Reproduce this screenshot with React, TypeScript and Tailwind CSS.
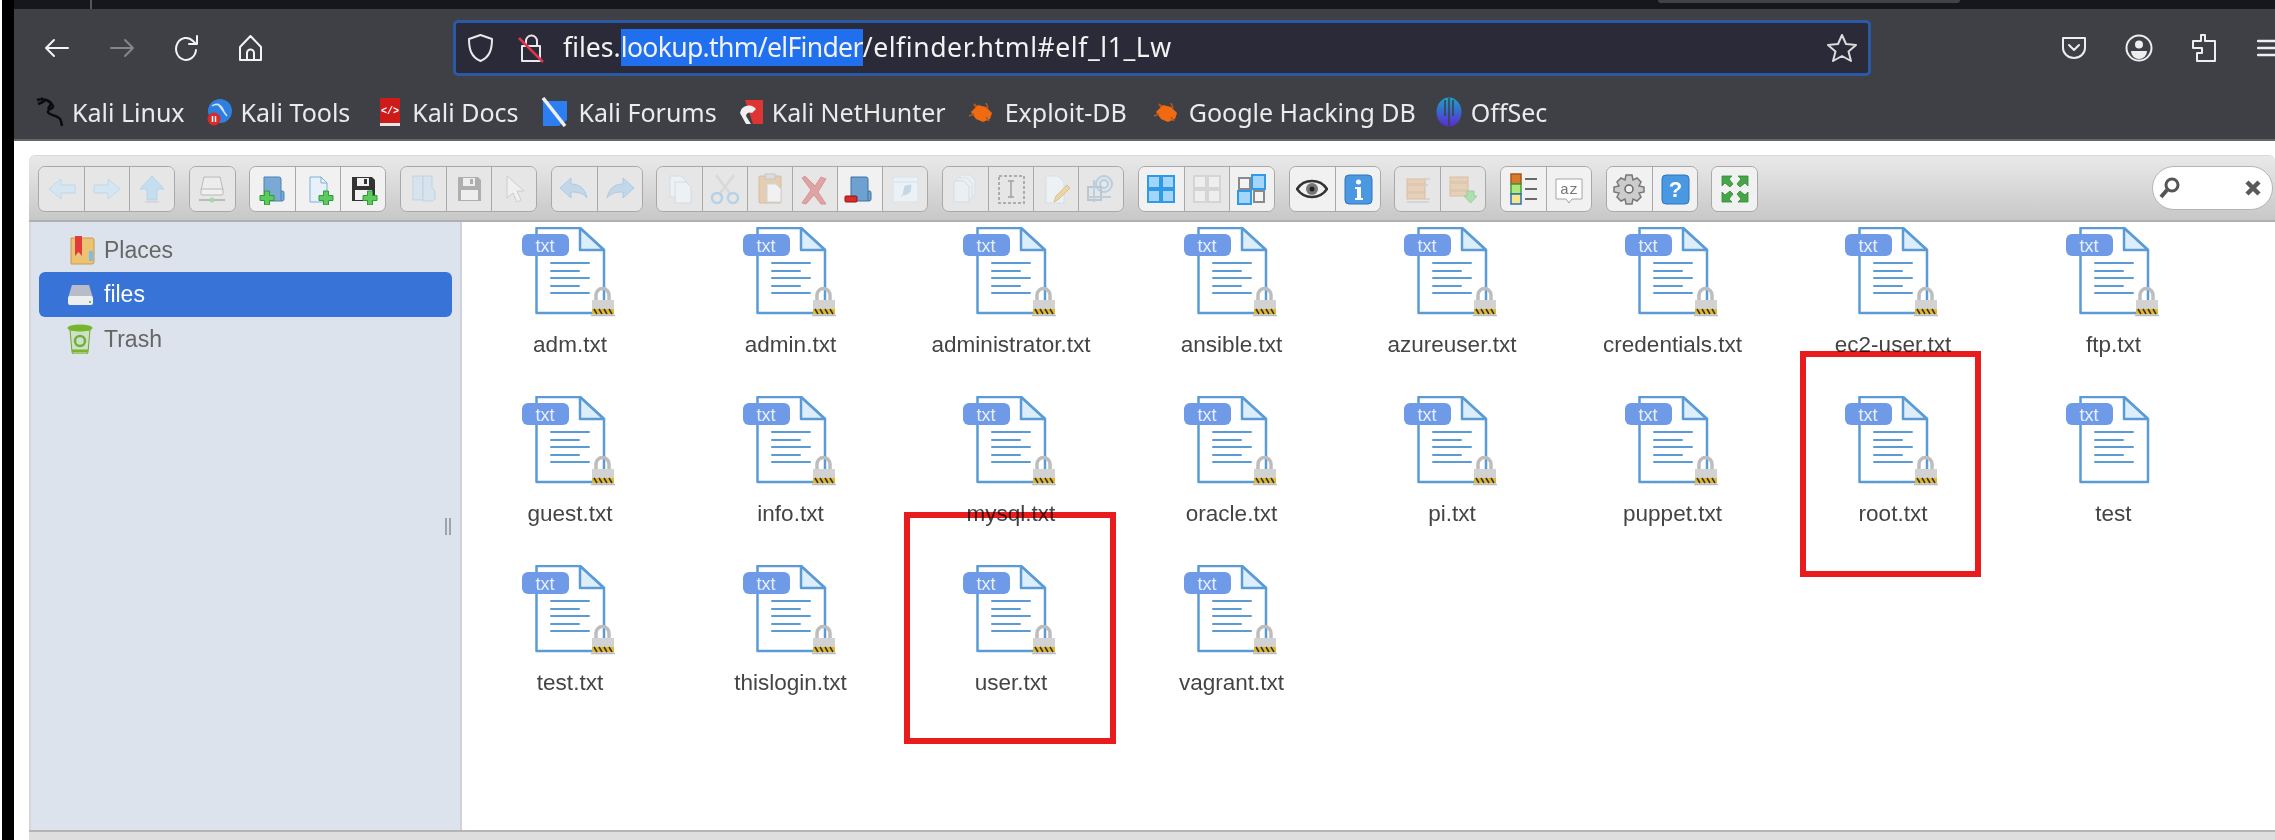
import React from "react";

const UI = { fontFamily: '"Noto Sans", sans-serif' };

const Stroke = ({ w, h, children, sw = 2 }: { w: number; h: number; children: React.ReactNode; sw?: number }) => (
  <svg width={w} height={h} viewBox={`0 0 ${w} ${h}`} fill="none" stroke="currentColor" strokeWidth={sw} strokeLinecap="round" strokeLinejoin="round" className="block shrink-0">
    {children}
  </svg>
);

const Plus = ({ x, y }: { x: number; y: number }) => (
  <path d={`M${x - 2.5} ${y - 7}h5v4.500h4.500v5h-4.500v4.500h-5v-4.500h-4.500v-5h4.500z`} fill="#5ccb5c" stroke="#2f9b3a" strokeWidth="1" />
);
const Minus = ({ x, y }: { x: number; y: number }) => <rect x={x} y={y} width="12" height="6" rx="1" fill="#d92b2b" stroke="#8d1616" strokeWidth="1" />;

const Folder = ({ fill = "#7aa9d6", stroke = "#4f81b3" }: { fill?: string; stroke?: string }) => (
  <g>
    <path d="M7 4h15a2 2 0 0 1 2 2v12h1.500a1.500 1.500 0 0 1 1.500 1.500V26a2 2 0 0 1-2 2H9a2 2 0 0 1-2-2z" fill={fill} stroke={stroke} strokeWidth="1" />
    <path d="M24 18v10" stroke={stroke} strokeWidth="1" />
  </g>
);
const Doc = ({ fill = "#e6f1fa", stroke = "#7fb0d8" }: { fill?: string; stroke?: string }) => (
  <path d="M8 4h11l6 6v19H8z M19 4v6h6" fill={fill} stroke={stroke} strokeWidth="1" />
);
const Floppy = ({ body = "#333" }: { body?: string }) => (
  <g>
    <path d="M5 4h20l3 3v21H5z" fill={body} />
    <rect x="10" y="5" width="12" height="8" fill="#f1f1f1" />
    <rect x="17" y="6" width="3" height="5" fill={body} />
    <rect x="8" y="17" width="17" height="10" fill="#f1f1f1" />
  </g>
);
const GridIcon = ({ color, inner }: { color: string; inner: string }) => (
  <g>
    {[[3, 3], [17, 3], [3, 17], [17, 17]].map(([x, y]) => (
      <rect key={`${x}-${y}`} x={x} y={y} width="12" height="12" fill={inner} stroke={color} strokeWidth="2" />
    ))}
  </g>
);

const icons: Record<string, React.ReactNode> = {
  back: <path d="M3 16 15 6v6h14v8H15v6z" fill="#cfe6f5" stroke="#b3d3ea" strokeWidth="1" />,
  forward: <path d="M29 16 17 6v6H3v8h14v6z" fill="#cfe6f5" stroke="#b3d3ea" strokeWidth="1" />,
  up: (
    <g>
      <path d="M16 3 28 16h-7v11h-10V16H4z" fill="#b9dcf3" stroke="#a5cde9" strokeWidth="1" />
      <path d="M9 29h14" stroke="#cccccc" strokeWidth="1.500" />
    </g>
  ),
  net: (
    <g>
      <path d="M8 4h16l3 13H5z" fill="#eeeeee" stroke="#aaaaaa" strokeWidth="1" />
      <rect x="5" y="16" width="22" height="6" rx="1" fill="#f4f4f4" stroke="#aaaaaa" strokeWidth="1" />
      <path d="M3 27h26" stroke="#999999" strokeWidth="1.500" />
      <circle cx="16" cy="27" r="2.500" fill="#8fd48f" />
    </g>
  ),
  mkdir: (
    <g>
      <Folder />
      <Plus x={10} y={25} />
    </g>
  ),
  mkfile: (
    <g>
      <Doc />
      <Plus x={24} y={25} />
    </g>
  ),
  save: (
    <g>
      <Floppy />
      <Plus x={23} y={25} />
    </g>
  ),
  open: (
    <g>
      <path d="M5 3h10v24H5z" fill="#d3e2f0" stroke="#b5cde0" strokeWidth="1" />
      <path d="M15 3h9v12l3 3v8l-3 2h-9z" fill="#d3e2f0" stroke="#b5cde0" strokeWidth="1" />
    </g>
  ),
  download: <Floppy body="#9c9c9c" />,
  cursor: <path d="M9 3v22l6-5 4 9 4-2-4-9h7z" fill="#f4f4f4" stroke="#c4c4c4" strokeWidth="1" />,
  undo: <path d="M2 15 13 5v6c8 0 14 4 16 14-4-5-9-6-16-6v6z" fill="#b6d3eb" stroke="#9cc0de" strokeWidth="1" />,
  redo: <path d="M30 15 19 5v6c-8 0-14 4-16 14 4-5 9-6 16-6v6z" fill="#b6d3eb" stroke="#9cc0de" strokeWidth="1" />,
  copy: (
    <g>
      <path d="M6 3h11l5 5v16H6z" fill="#f0f4f8" stroke="#cdd8e2" strokeWidth="1" />
      <path d="M11 9h11l5 5v16H11z" fill="#eef4f9" stroke="#cdd8e2" strokeWidth="1" />
    </g>
  ),
  cut: (
    <g fill="none">
      <path d="M7 2l15 20M25 2 10 22" stroke="#d4d4d4" strokeWidth="2.500" />
      <ellipse cx="8" cy="25" rx="5" ry="5" stroke="#a5cbe6" strokeWidth="2.500" />
      <ellipse cx="24" cy="25" rx="5" ry="5" stroke="#a5cbe6" strokeWidth="2.500" />
    </g>
  ),
  paste: (
    <g>
      <rect x="5" y="3" width="22" height="27" rx="1" fill="#e3c6a4" stroke="#cfae8a" strokeWidth="1" />
      <rect x="11" y="1" width="10" height="5" fill="#d9d9d9" stroke="#bbbbbb" strokeWidth="1" />
      <path d="M13 11h9l5 5v13H13z" fill="#f5f5f5" stroke="#cccccc" strokeWidth="1" />
    </g>
  ),
  del: <path d="M6 3l10 10 6-9 5 2-8 13 8 12h-5l-7-9-8 9-4-1 9-13-9-12z" fill="#dd8c8c" stroke="#cf7b7b" strokeWidth="1" />,
  empty: (
    <g>
      <Folder fill="#6ea1cf" stroke="#41739f" />
      <Minus x={1} y={23} />
    </g>
  ),
  hide: (
    <g>
      <rect x="4" y="4" width="25" height="25" fill="#eff5fa" stroke="#d8e6f1" strokeWidth="1.500" />
      <path d="M4 9h25" stroke="#d8e6f1" strokeWidth="1.500" />
      <path d="M12 24 22 12M16 13l6-1-1 7-3 2-4 1z" fill="#b9d2e6" stroke="#b9d2e6" strokeWidth="1" />
    </g>
  ),
  dup: (
    <g>
      <path d="M10 2h10l5 5v16H10z" fill="#eef3f7" stroke="#d3dde6" strokeWidth="1" />
      <path d="M7 5h10l5 5v16H7z" fill="#eef3f7" stroke="#d3dde6" strokeWidth="1" />
      <path d="M4 8h10l5 5v16H4z" fill="#eef3f7" stroke="#cdd8e2" strokeWidth="1" />
    </g>
  ),
  rename: (
    <g>
      <rect x="4" y="3" width="25" height="27" fill="none" stroke="#9a9a9a" strokeWidth="2" strokeDasharray="3 2" />
      <path d="M13 8h6M16 8v16M13 24h6" stroke="#8a8a8a" strokeWidth="1.500" />
    </g>
  ),
  edit: (
    <g>
      <path d="M6 3h12l6 6v21H6z" fill="#eef4f9" stroke="#cfdde9" strokeWidth="1" />
      <path d="M14 29l2-6 11-11 3 3-11 11z" fill="#eccf8e" stroke="#d6b66f" strokeWidth="1" />
    </g>
  ),
  resize: (
    <g fill="none" stroke="#a6c7df" strokeWidth="2">
      <circle cx="19" cy="11" r="8" />
      <circle cx="19" cy="11" r="4" />
      <rect x="3" y="14" width="13" height="13" stroke="#a8bccc" />
      <path d="M9 7v22M2 24h24" stroke="#b3c6d4" />
    </g>
  ),
  selall: <GridIcon color="#2f9be8" inner="#a4d6fb" />,
  selnone: <GridIcon color="#d0d0d0" inner="#f1f1f1" />,
  invert: (
    <g>
      <rect x="3" y="5" width="11" height="11" fill="#f4f4f4" stroke="#8a8a8a" strokeWidth="2" />
      <rect x="16" y="2" width="13" height="14" fill="#a4d6fb" stroke="#2f9be8" strokeWidth="2" />
      <rect x="2" y="18" width="13" height="13" fill="#a4d6fb" stroke="#2f9be8" strokeWidth="2" />
      <rect x="18" y="18" width="10" height="11" fill="#f4f4f4" stroke="#8a8a8a" strokeWidth="2" />
    </g>
  ),
  eye: (
    <g>
      <path d="M1 16c4-6 9-8 15-8s11 2 15 8c-4 6-9 8-15 8S5 22 1 16z" fill="#f1f1f1" stroke="#333333" strokeWidth="2.500" />
      <circle cx="16" cy="16" r="6" fill="#777777" />
      <circle cx="16" cy="16" r="2.500" fill="#222222" />
    </g>
  ),
  info: (
    <g>
      <rect x="3" y="2" width="27" height="29" rx="4" fill="#4a97e2" stroke="#2e76be" strokeWidth="1" />
      <circle cx="16.500" cy="9" r="2.500" fill="#ffffff" />
      <path d="M13 14h6v11h2v2h-8v-2h2v-9h-2z" fill="#ffffff" />
    </g>
  ),
  extract: (
    <g>
      <rect x="5" y="6" width="18" height="5" fill="#e6c8a8" stroke="#d4b490" strokeWidth="1" />
      <rect x="5" y="12" width="18" height="7" fill="#e6c8a8" stroke="#d4b490" strokeWidth="1" />
      <rect x="5" y="20" width="18" height="6" fill="#e6c8a8" stroke="#d4b490" strokeWidth="1" />
      <path d="M23 6h5M23 12h3M23 26h5M5 29h22" stroke="#c9c9c9" strokeWidth="1.500" />
    </g>
  ),
  archive: (
    <g>
      <rect x="3" y="4" width="18" height="5" fill="#e6c8a8" stroke="#d4b490" strokeWidth="1" />
      <rect x="3" y="10" width="18" height="7" fill="#e6c8a8" stroke="#d4b490" strokeWidth="1" />
      <rect x="3" y="18" width="18" height="5" fill="#e6c8a8" stroke="#d4b490" strokeWidth="1" />
      <path d="M20 18h7v5h3l-6.500 7L17 23h3z" fill="#9bdc9b" stroke="#82c782" strokeWidth="1" />
    </g>
  ),
  list: (
    <g>
      <rect x="4" y="1" width="10" height="10" fill="#d97a2c" stroke="#a2581e" strokeWidth="1.500" />
      <rect x="4" y="11" width="10" height="10" fill="#aee87a" stroke="#3f9a3f" strokeWidth="1.500" />
      <rect x="4" y="21" width="10" height="10" fill="#f6e68c" stroke="#2c6fb7" strokeWidth="1.500" />
      <path d="M18 6h12M18 16h12M18 26h12" stroke="#6a6a6a" strokeWidth="2" />
    </g>
  ),
  sort: (
    <g>
      <path d="M3 6h26v20H19l-3 4-3-4H3z" fill="#ffffff" stroke="#a5a5a5" strokeWidth="1" />
      <text x="7" y="21" fontSize="15" fill="#777777" stroke="none" fontFamily="Liberation Mono, monospace">az</text>
    </g>
  ),
  prefs: (
    <g>
      <path d="M13 2h6l1 5 4-2 4 4-2 4 5 1v5l-5 1 2 4-4 4-4-2-1 5h-6l-1-5-4 2-4-4 2-4-5-1v-5l5-1-2-4 4-4 4 2z" fill="#cccccc" stroke="#777777" strokeWidth="1.500" />
      <circle cx="16" cy="16" r="4" fill="#efefef" stroke="#666666" strokeWidth="1.500" />
    </g>
  ),
  help: (
    <g>
      <rect x="3" y="2" width="27" height="29" rx="4" fill="#4a97e2" stroke="#2e76be" strokeWidth="1" />
      <text x="16.500" y="24" textAnchor="middle" fontSize="22" fontWeight="700" fill="#ffffff" stroke="none" fontFamily="Liberation Sans, sans-serif">?</text>
    </g>
  ),
  full: (
    <g fill="#46a546" stroke="#2f8a3a" strokeWidth="0.800">
      <path d="M3 3h10l-3 3 4 5-3 3-5-4-3 3z" />
      <path d="M29 3H19l3 3-4 5 3 3 5-4 3 3z" />
      <path d="M3 29h10l-3-3 4-5-3-3-5 4-3-3z" />
      <path d="M29 29H19l3-3-4-5 3-3 5 4 3-3z" />
    </g>
  ),
};

type B = { k: string; on?: boolean };
const groups: B[][] = [
  [{ k: "back" }, { k: "forward" }, { k: "up" }],
  [{ k: "net" }],
  [{ k: "mkdir", on: true }, { k: "mkfile", on: true }, { k: "save", on: true }],
  [{ k: "open" }, { k: "download" }, { k: "cursor" }],
  [{ k: "undo" }, { k: "redo" }],
  [{ k: "copy" }, { k: "cut" }, { k: "paste" }, { k: "del" }, { k: "empty", on: true }, { k: "hide" }],
  [{ k: "dup" }, { k: "rename" }, { k: "edit" }, { k: "resize" }],
  [{ k: "selall", on: true }, { k: "selnone" }, { k: "invert", on: true }],
  [{ k: "eye", on: true }, { k: "info", on: true }],
  [{ k: "extract" }, { k: "archive" }],
  [{ k: "list", on: true }, { k: "sort", on: true }],
  [{ k: "prefs", on: true }, { k: "help", on: true }],
  [{ k: "full", on: true }],
];

const TxtIcon = ({ locked = true }: { locked?: boolean }) => (
  <svg width="96" height="90" viewBox="0 0 96 90" className="block">
    <path d="M14.500 1H58L82 23V86H14.500z" fill="#ffffff" stroke="#5b9bd5" strokeWidth="2.500" strokeLinejoin="round" />
    <path d="M58 1V23H82z" fill="#dcedfb" stroke="#5b9bd5" strokeWidth="2.500" strokeLinejoin="round" />
    <rect x="0" y="7" width="47" height="22" rx="6" fill="#6f9ae8" />
    <text x="23" y="25" textAnchor="middle" fontSize="18" fill="#e8effc" fontFamily="Liberation Sans, sans-serif">txt</text>
    <g stroke="#5b9bd5" strokeWidth="2" strokeLinecap="round">
      <path d="M29 36H67M29 44H57M29 51H67M29 59H57M29 66H67" />
    </g>
    {locked && (
      <g>
        <path d="M74 78V68a6.500 6.500 0 0 1 13 0v10" fill="none" stroke="#bdbdbd" strokeWidth="3.500" />
        <rect x="70" y="73" width="22" height="15" fill="#d2d2d2" />
        <path d="M70 82h22v5H70z" fill="#e3b92a" />
        <path d="M72 82l3 5M77 82l3 5M82 82l3 5M87 82l3 5" stroke="#333333" strokeWidth="1.500" />
        <path d="M69 88.500h24" stroke="#bdbdbd" strokeWidth="1.500" />
      </g>
    )}
  </svg>
);

const files = [
  "adm.txt", "admin.txt", "administrator.txt", "ansible.txt", "azureuser.txt", "credentials.txt", "ec2-user.txt", "ftp.txt",
  "guest.txt", "info.txt", "mysql.txt", "oracle.txt", "pi.txt", "puppet.txt", "root.txt", "test",
  "test.txt", "thislogin.txt", "user.txt", "vagrant.txt",
];

const Bug = () => (
  <svg width="26" height="24" viewBox="0 0 26 24" className="block shrink-0">
    <path d="M6 4l14 16" stroke="#b9551c" strokeWidth="2" />
    <path d="M3 12l7-7 8 2 6 6-2 6-7 3-7-3z" fill="#ef6a10" />
    <path d="M1 16l5-2M18 3l2 5M21 21l-3-4" stroke="#ad5a2a" strokeWidth="1.500" />
  </svg>
);

const marks: { t: string; ml: number; g: number; i: React.ReactNode }[] = [
  {
    t: "Kali Linux", ml: 22, g: 8,
    i: (
      <svg width="28" height="30" viewBox="0 0 28 30" className="block shrink-0">
        <path d="M1 3c6-2 13 0 16 6 1 3-6 3-5 6 1 4 12 3 13 9l1 5M5 1l4 4M2 7l5-2M15 7l-3 5" fill="none" stroke="#0b0b0d" strokeWidth="2.500" />
      </svg>
    ),
  },
  {
    t: "Kali Tools", ml: 22, g: 9,
    i: (
      <svg width="25" height="28" viewBox="0 0 25 28" className="block shrink-0">
        <circle cx="13" cy="13" r="12" fill="#2f7fe0" />
        <path d="M5 8c6-4 10 0 12 6M11 6l9 12" stroke="#cfe3fb" strokeWidth="1.500" fill="none" />
        <circle cx="7" cy="21" r="6.500" fill="#d92a2a" />
        <path d="M5.500 18v6M8.500 18v6" stroke="#ffffff" strokeWidth="1.500" />
      </svg>
    ),
  },
  {
    t: "Kali Docs", ml: 29, g: 11,
    i: (
      <svg width="22" height="30" viewBox="0 0 22 30" className="block shrink-0">
        <rect x="1" y="1" width="20" height="26" fill="#cf1a1a" />
        <path d="M1 26h20v3H1z" fill="#e6e6e6" />
        <text x="11" y="17" textAnchor="middle" fontSize="10" fontWeight="700" fill="#ffffff" fontFamily="Liberation Mono, monospace">{"</>"}</text>
      </svg>
    ),
  },
  {
    t: "Kali Forums", ml: 22, g: 10,
    i: (
      <svg width="28" height="30" viewBox="0 0 28 30" className="block shrink-0">
        <path d="M2 4h24v19l-8 6H2z" fill="#2b7ff0" />
        <path d="M2 1l22 28" stroke="#efefef" strokeWidth="3.500" />
      </svg>
    ),
  },
  {
    t: "Kali NetHunter", ml: 20, g: 8,
    i: (
      <svg width="27" height="26" viewBox="0 0 27 26" className="block shrink-0">
        <path d="M8 1h18v24H16z" fill="#de3434" />
        <path d="M3 14a9 9 0 0 1 16-4l-4 4a4 4 0 0 0-6 3l5 8H9z" fill="#efefef" />
      </svg>
    ),
  },
  { t: "Exploit-DB", ml: 22, g: 11, i: <Bug /> },
  { t: "Google Hacking DB", ml: 26, g: 10, i: <Bug /> },
  {
    t: "OffSec", ml: 20, g: 9,
    i: (
      <svg width="26" height="30" viewBox="0 0 26 30" className="block shrink-0">
        <defs>
          <linearGradient id="off" x1="0" y1="0" x2="0" y2="1">
            <stop offset="0" stopColor="#19a3c8" />
            <stop offset="1" stopColor="#5a2bd0" />
          </linearGradient>
        </defs>
        <ellipse cx="13" cy="15" rx="12.500" ry="14.500" fill="url(#off)" />
        <path d="M13 1v28M9 3v16M17 3v16" stroke="#3e3f45" strokeWidth="1.500" />
      </svg>
    ),
  },
];

export default function App() {
  return (
    <div className="relative flex h-[840px] w-[2275px] overflow-hidden bg-white" style={{ fontFamily: '"Liberation Sans", sans-serif' }}>
      <div className="h-full w-[2px] shrink-0 bg-white" />
      <div className="h-full w-[12px] shrink-0 bg-black" />
      <div className="flex h-full min-w-0 flex-1 flex-col">
        {/* browser chrome */}
        <div className="flex h-[141px] shrink-0 flex-col border-b-2 border-[#66676d] bg-[#3f4046]" style={UI}>
          <div className="relative h-[9px] shrink-0 bg-[#16171c]">
            <div className="absolute left-[76px] top-0 h-[9px] w-[2px] bg-[#55565c]" />
            <div className="absolute left-[1644px] top-0 h-[3px] w-[302px] rounded-b-[4px] bg-[#414247]" />
          </div>
          <div className="flex h-[77px] shrink-0 items-center text-[#f4f4f5]">
            <div className="ml-[29px] w-[27px]">
              <Stroke w={27} h={22}><path d="M25 11H3M11 3l-8 8 8 8" /></Stroke>
            </div>
            <div className="ml-[39px] w-[27px] text-[#85868a]">
              <Stroke w={27} h={22}><path d="M2 11h22M16 3l8 8-8 8" /></Stroke>
            </div>
            <div className="ml-[37px] w-[27px]">
              <Stroke w={27} h={28}><path d="M23 16a10 11 0 1 1-3-9l3 3M24 2v8h-8" /></Stroke>
            </div>
            <div className="ml-[37px] w-[27px]">
              <Stroke w={27} h={28}><path d="M3 13 13.500 2 24 13v13H3zM10 26v-7a3.500 3.500 0 0 1 7 0v7" /></Stroke>
            </div>
            <div className="ml-[189px] flex h-[56px] w-[1418px] shrink-0 items-center rounded-[5px] border-[3px] border-[#2a5aa6] bg-[#2a2a38]">
              <div className="ml-[11px] text-[#e8e8ea]">
                <Stroke w={27} h={30}><path d="M13.500 2 25 6c0 10-2 18-11.500 22C4 24 2 16 2 6z" /></Stroke>
              </div>
              <div className="relative ml-[24px] text-[#e8e8ea]">
                <Stroke w={26} h={30}>
                  <path d="M8 13V8a5.500 5.500 0 0 1 11 0v5M4 13h18v15H4z" />
                </Stroke>
                <svg width="26" height="30" viewBox="0 0 26 30" className="absolute left-0 top-0">
                  <path d="M1 5l24 24" stroke="#e0344a" strokeWidth="2.500" />
                </svg>
              </div>
              <div className="ml-[19px] flex h-[37px] items-center whitespace-nowrap text-[26.600px] leading-[37px] text-[#f2f2f3]">
                <span>files.</span>
                <span className="bg-[#1f6fef] tracking-[-0.7px]">lookup.thm/elFinder</span>
                <span className="tracking-[0.55px]">/elfinder.html#elf_l1_Lw</span>
              </div>
              <div className="ml-auto mr-[11px] text-[#dcdcde]">
                <Stroke w={30} h={30}><path d="M15 2l4 9 10 1-7.500 6.500L24 28l-9-5-9 5 2.500-9.500L1 12l10-1z" /></Stroke>
              </div>
            </div>
            <div className="ml-[190px] text-[#eeeeef]">
              <Stroke w={26} h={24}><path d="M2 2h22v10a11 10 0 0 1-22 0zM8 9l5 5 5-5" /></Stroke>
            </div>
            <div className="ml-[38px] text-[#eeeeef]">
              <svg width="28" height="28" viewBox="0 0 28 28" className="block">
                <circle cx="14" cy="14" r="12.500" fill="none" stroke="currentColor" strokeWidth="2" />
                <circle cx="14" cy="10.500" r="4" fill="currentColor" />
                <path d="M6 17h16a8 8 0 0 1-16 0z" fill="currentColor" />
              </svg>
            </div>
            <div className="ml-[38px] text-[#eeeeef]">
              <Stroke w={26} h={30}><path d="M10 2h4v6h10v20H6v-8h5v-5H2V8h8z" /></Stroke>
            </div>
            <div className="ml-[40px] text-[#eeeeef]">
              <Stroke w={24} h={20} sw={2.500}><path d="M1 3h28M1 10h28M1 17h28" /></Stroke>
            </div>
          </div>
          <div className="flex h-[53px] shrink-0 items-center whitespace-nowrap pb-[2px] text-[25px] leading-[34px] text-[#ebebec]">
            {marks.map((m) => (
              <div key={m.t} className="flex items-center" style={{ marginLeft: m.ml, gap: m.g }}>
                {m.i}
                <span>{m.t}</span>
              </div>
            ))}
          </div>
        </div>

        {/* elFinder */}
        <div className="flex min-h-0 flex-1 flex-col pl-[15px] pt-[14px]">
          <div className="flex h-[67px] shrink-0 items-start rounded-t-[6px] border-b-2 border-t border-[#b0b0b0] border-t-[#d8d8d8] bg-gradient-to-b from-[#e9e9e9] to-[#c8c8c8] pl-[9px] pt-[10px]">
            {groups.map((g, i) => (
              <div key={i} className="mr-[13.700px] flex h-[46px] shrink-0 overflow-hidden rounded-[7px] border border-[#a9a9a9]">
                {g.map((b, j) => (
                  <div
                    key={b.k}
                    className={`flex h-full w-[45px] items-center justify-center ${j > 0 ? "border-l border-[#a9a9a9]" : ""} ${b.on ? "bg-[#f1f1f1]" : "bg-[#e6e6e6]"}`}
                  >
                    <svg width="32" height="32" viewBox="0 0 32 32" className={b.on ? "block" : "block opacity-75"}>
                      {icons[b.k]}
                    </svg>
                  </div>
                ))}
              </div>
            ))}
            <div className="ml-auto mr-[2px] flex h-[44px] w-[121px] items-center justify-between rounded-full border border-[#b5b5b5] bg-white px-[5px]">
              <svg width="24" height="24" viewBox="0 0 24 24" className="block">
                <circle cx="14" cy="9" r="6" fill="none" stroke="#555555" strokeWidth="3" />
                <path d="M9 14l-6 7" stroke="#555555" strokeWidth="4" />
              </svg>
              <svg width="20" height="20" viewBox="0 0 20 20" className="mr-[4px] block">
                <path d="M4 4l12 12M16 4 4 16" stroke="#5a5a5a" strokeWidth="4.500" />
              </svg>
            </div>
          </div>
          <div className="flex min-h-0 flex-1">
            <div className="relative h-full w-[433px] shrink-0 border-l-2 border-r-2 border-l-[#d4d6da] border-r-[#cfd2d8] bg-[#dde3ec] pl-[8px] pt-[9px] text-[23px] text-[#666666]">
              <div className="mb-[3px] flex h-[38px] items-center pl-[30px]">
                <svg width="26" height="30" viewBox="0 0 26 30" className="block shrink-0">
                  <path d="M2 3h21a2 2 0 0 1 2 2v22a2 2 0 0 1-2 2H2z" fill="#edc373" stroke="#c99a48" strokeWidth="1" />
                  <path d="M6 1h7v20l-3.500-4L6 21z" fill="#e23b3b" />
                  <rect x="20" y="16" width="4" height="10" fill="#7fbce8" />
                </svg>
                <span className="ml-[9px]">Places</span>
              </div>
              <div className="flex h-[45px] w-[413px] items-center rounded-[6px] bg-[#3874d8] pl-[28px] text-white">
                <svg width="27" height="22" viewBox="0 0 27 22" className="block shrink-0">
                  <path d="M5 1h17l4 13H1z" fill="#b8bcc8" />
                  <rect x="1" y="12" width="25" height="9" rx="2" fill="#eeeeee" />
                  <circle cx="23" cy="18" r="1" fill="#3ca93c" />
                </svg>
                <span className="ml-[10px]">files</span>
              </div>
              <div className="mt-[2px] flex h-[40px] items-center pl-[28px]">
                <svg width="26" height="30" viewBox="0 0 26 30" className="block shrink-0">
                  <path d="M3 6h20l-2 22a2 2 0 0 1-2 2H7a2 2 0 0 1-2-2z" fill="#cfe0c8" stroke="#71a82e" strokeWidth="1" />
                  <ellipse cx="13" cy="4" rx="12.500" ry="3.500" fill="#77b52a" />
                  <circle cx="13" cy="17" r="5" fill="none" stroke="#6fb03a" strokeWidth="2.500" />
                  <path d="M5 27h16" stroke="#77b52a" strokeWidth="3" />
                </svg>
                <span className="ml-[11px]">Trash</span>
              </div>
              <div className="absolute right-[9px] top-[296px] flex gap-[2px]">
                <div className="h-[17px] w-[2px] bg-[#9da3ab]" />
                <div className="h-[17px] w-[2px] bg-[#9da3ab]" />
              </div>
            </div>
            <div className="grid min-w-0 flex-1 auto-rows-[169px] grid-cols-[repeat(8,216px)] content-start gap-x-[4.500px] overflow-hidden bg-white text-[22.500px] text-[#444444]">
              {files.map((f) => (
                <div key={f} className="flex flex-col items-center pt-[5px]">
                  <TxtIcon locked={f !== "test"} />
                  <div className="mt-[14px] whitespace-nowrap leading-[28px]">{f}</div>
                </div>
              ))}
            </div>
          </div>
          <div className="h-[10px] shrink-0 border-t-2 border-[#b4b4b4] bg-[#dedede]" />
        </div>
      </div>

      {/* red annotations */}
      <div className="pointer-events-none absolute left-[1800px] top-[351px] h-[226px] w-[181px] border-[6px] border-[#e81c1c] mix-blend-multiply" />
      <div className="pointer-events-none absolute left-[904px] top-[512px] h-[232px] w-[212px] border-[6px] border-[#e81c1c] mix-blend-multiply" />
    </div>
  );
}
